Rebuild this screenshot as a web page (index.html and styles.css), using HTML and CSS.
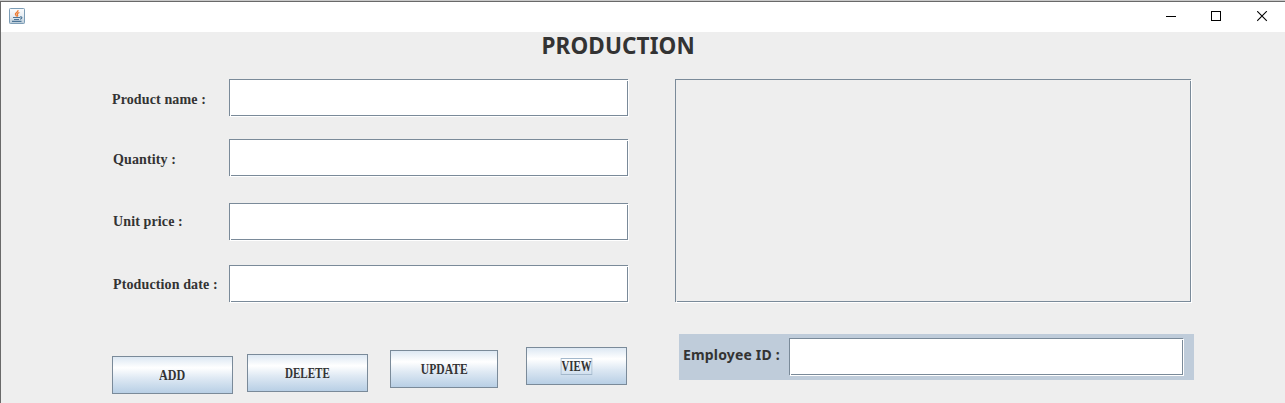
FILE: index.html
```html
<!DOCTYPE html>
<html lang="en">
<head>
<meta charset="utf-8">
<title>Production</title>
<link rel="stylesheet" href="styles.css">
</head>
<body>
<div class="window">
  <header class="titlebar">
    <svg class="app-icon" width="16" height="16" viewBox="0 0 16 16">
      <defs>
        <linearGradient id="tile" x1="0" y1="0" x2="0" y2="1">
          <stop offset="0" stop-color="#fbfcfd"/><stop offset="0.5" stop-color="#e8eef3"/><stop offset="1" stop-color="#b9cbd8"/>
        </linearGradient>
      </defs>
      <rect x="0.5" y="0.5" width="15" height="15" rx="0.8" fill="url(#tile)" stroke="#7d9db6"/>
      <path d="M9 2.2C9.5 4 6 4.7 6.4 6.2C6.6 7 7.3 7.6 7.6 8.4M10.4 4.5C8.6 5.1 7.7 6 8.6 7.1C8.9 7.7 8.7 8.1 8.3 8.5" fill="none" stroke="#ec7b32" stroke-width="1.3"/>
      <path d="M4 9.5H11M5 11.5H10M11 9C13.8 8.3 13.3 10.6 11 11.2M3 13.4H12.5" fill="none" stroke="#4c7597" stroke-width="1.1"/>
    </svg>
    <div class="controls">
      <svg width="11" height="11" viewBox="0 0 11 11" shape-rendering="crispEdges"><path d="M0 5.5H10" stroke="#000"/></svg>
      <svg width="11" height="11" viewBox="0 0 11 11" shape-rendering="crispEdges"><path d="M.5 .5H9.5V9.5H.5Z" fill="none" stroke="#000"/></svg>
      <svg class="close" width="11" height="11" viewBox="0 0 11 11"><path d="M.2 .2L9.8 9.8M9.8 .2L.2 9.8" stroke="#000" stroke-width="1.1"/></svg>
    </div>
  </header>
  <main class="content">
    <h1 class="heading">PRODUCTION</h1>
    <div class="columns">
      <section class="left">
        <div class="row row-name"><label class="label">Product name :</label><div class="field"></div></div>
        <div class="row row-quantity"><label class="label">Quantity :</label><div class="field"></div></div>
        <div class="row row-price"><label class="label">Unit price :</label><div class="field"></div></div>
        <div class="row row-date"><label class="label">Ptoduction date :</label><div class="field"></div></div>
        <div class="buttons">
          <button class="button add"><span>ADD</span></button>
          <button class="button delete"><span>DELETE</span></button>
          <button class="button update"><span>UPDATE</span></button>
          <button class="button view"><span class="focused">VIEW</span></button>
        </div>
      </section>
      <section class="right">
        <div class="field output"></div>
        <div class="employee"><label class="employee-label">Employee ID :</label><div class="field"></div></div>
      </section>
    </div>
  </main>
</div>
</body>
</html>
```
FILE: styles.css
```css
* { box-sizing: border-box; }
body { margin: 0; height: 403px; overflow: hidden; background: #c9c9c9; }
.window { height: 403px; margin-top: 1px; border-top: 1px solid #696969; border-left: 1px solid #696969; background: #eee; }
.titlebar { height: 30px; background: #fff; display: flex; justify-content: space-between; padding: 6px 17px 0 8px; }
.app-icon { display: block; }
.controls { display: flex; gap: 34px; padding-top: 3px; }
.controls svg { display: block; }
.controls .close { margin-left: 1px; }
.content { color: #333; }
.heading { margin: 0 0 0 540.5px; height: 47px; font: bold 22.5px/28px "Noto Sans", sans-serif; letter-spacing: 0.1px; white-space: nowrap; }
.columns { display: flex; }
.left { width: 674px; padding-left: 111px; }
.row { display: flex; align-items: center; height: 37px; }
.row-name { margin-bottom: 23px; }
.row-quantity { margin-bottom: 27px; }
.row-price { margin-bottom: 25px; }
.row-quantity .label, .row-price .label, .row-date .label { padding-left: 1px; }
.label { width: 117px; flex: none; padding-top: 1px; font: bold 14px/18px "Liberation Serif", serif; letter-spacing: 0.12px; white-space: nowrap; }
.row-name .label, .row-quantity .label { padding-top: 5px; }
.row-date .label { padding-top: 3px; }
.field { position: relative; width: 399px; height: 37px; flex: none; background: #fff; border: 1px solid #7a8a99; box-shadow: 1px 1px 0 #fff; }
.field::before, .field::after { content: ""; position: absolute; width: 1px; height: 1px; background: #fff; }
.field::before { left: 0; bottom: -1px; }
.field::after { right: -1px; top: 0; }
.buttons { display: flex; align-items: flex-start; margin-top: 45px; }
.button { height: 38px; margin: 0; padding: 0; border: 1px solid #7a8a99; color: #333; background: linear-gradient(#dde8f3 0, #fff 30%, #dde8f3 60%, #b8cfe5 100%); font: bold 14px/15px "Liberation Serif", serif; }
.button span { display: inline-block; transform: scaleX(0.79); }
.add { width: 121px; margin: 9px 14px 0 0; }
.button.add span { transform: scaleX(0.86); }
.delete { width: 121px; margin: 7px 22px 0 0; }
.update { width: 108px; margin: 3px 28px 0 0; }
.button.update span { transform: scaleX(0.83); }
.view { width: 101px; }
.button.view .focused { outline: 1px solid #a3b8cc; transform: scaleX(0.77); }
.output { width: 516px; height: 223px; background: #eee; }
.output::before, .output::after { background: #eee; }
.employee { display: flex; width: 515px; height: 46px; margin: 32px 0 0 4px; padding: 4px 0 0 4px; background: #bfccda; }
.employee-label { width: 106px; flex: none; font: bold 14px/34px "Noto Sans", sans-serif; letter-spacing: 0.17px; white-space: nowrap; }
.employee .field { width: 394px; }
```
